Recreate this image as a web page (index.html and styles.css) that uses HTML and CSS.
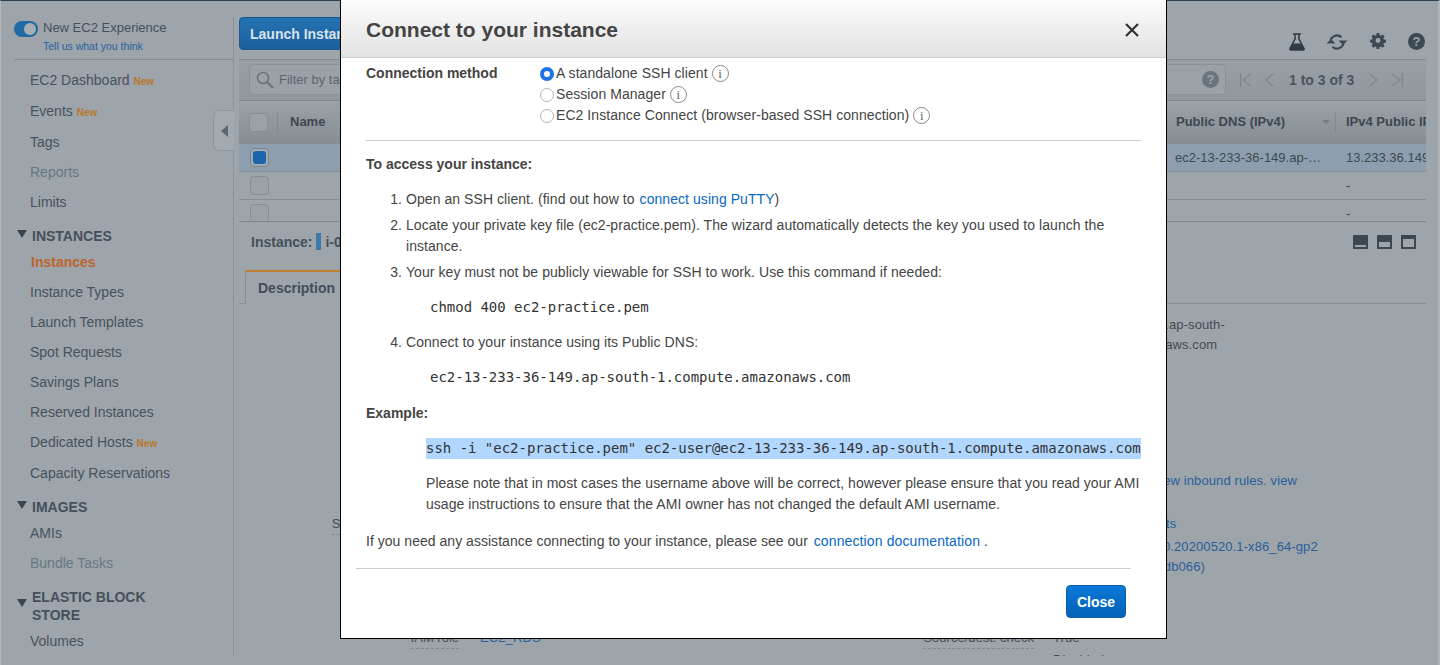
FILE: index.html
```html
<!DOCTYPE html>
<html lang="en">
<head>
<meta charset="utf-8">
<title>Connect to your instance</title>
<link rel="stylesheet" href="styles.css">
</head>
<body>
<div class="page">
  <aside class="sidebar">
    <div class="experience">
      <span class="toggle"><span class="toggle-knob"></span></span>
      <div>
        <div class="exp-title">New EC2 Experience</div>
        <a class="exp-link">Tell us what you think</a>
      </div>
    </div>
    <ul class="nav">
      <li class="tall">EC2 Dashboard <span class="new">New</span></li>
      <li class="tall">Events <span class="new">New</span></li>
      <li>Tags</li>
      <li class="muted">Reports</li>
      <li>Limits</li>
    </ul>
    <h3 class="nav-head"><span class="caret"></span>INSTANCES</h3>
    <ul class="nav">
      <li class="current">Instances</li>
      <li>Instance Types</li>
      <li>Launch Templates</li>
      <li>Spot Requests</li>
      <li>Savings Plans</li>
      <li>Reserved Instances</li>
      <li class="tall">Dedicated Hosts <span class="new">New</span></li>
      <li>Capacity Reservations</li>
    </ul>
    <h3 class="nav-head"><span class="caret"></span>IMAGES</h3>
    <ul class="nav">
      <li>AMIs</li>
      <li class="muted">Bundle Tasks</li>
    </ul>
    <h3 class="nav-head nav-head-double"><span class="caret"></span>ELASTIC BLOCK<br>STORE</h3>
    <ul class="nav">
      <li>Volumes</li>
    </ul>
    <div class="collapse"><span class="collapse-arrow"></span></div>
  </aside>

  <main class="main">
    <div class="toolbar">
      <button class="launch">Launch Instance</button>
      <div class="tools">
        <svg class="tool" width="20" height="18" viewBox="0 0 20 18"><path d="M6 1h8M8 1v5L3 15.500Q2.600 17 4 17h12q1.400 0 1-1.500L12 6V1" fill="none" stroke="#2f3a44" stroke-width="1.500"/><path d="M5.800 10.500h8.400L17.800 17H2.200z" fill="#2f3a44"/></svg>
        <svg class="tool" width="22" height="18" viewBox="0 0 22 18"><path d="M4.500 9a6.500 6.500 0 0 1 11-4.700M17.500 9a6.500 6.500 0 0 1-11 4.700" fill="none" stroke="#3c4852" stroke-width="2.200"/><path d="M12.500 7.500h9l-4.500 4.500zM.5 10.500h9L5 6z" fill="#3c4852"/></svg>
        <svg class="tool" width="16" height="16" viewBox="0 0 16 16"><path fill-rule="evenodd" d="M6.500 0h3l.4 2.300 1.300.6L13.200 1.600l2.100 2.100-1.300 2 .6 1.300 2.300.5v3l-2.300.4-.6 1.300 1.300 1.900-2.100 2.100-2-1.300-1.300.6-.4 2.300h-3l-.4-2.300-1.300-.6-1.900 1.300-2.100-2.100 1.300-1.900-.6-1.300L-.8 10.500v-3l2.300-.5.6-1.300-1.300-2 2.100-2.100 2 1.300 1.300-.6zM8 5.500a2.700 2.700 0 1 0 0 5.400 2.700 2.700 0 0 0 0-5.400z" fill="#3c4852" transform="translate(.8 .1) scale(.9)"/></svg>
        <span class="help help-dark">?</span>
      </div>
    </div>

    <div class="filterbar">
      <div class="search">
        <svg width="18" height="18" viewBox="0 0 18 18"><circle cx="7" cy="7" r="5.500" fill="none" stroke="#6b747b" stroke-width="1.600"/><path d="M11 11l6 6" stroke="#6b747b" stroke-width="2.400"/></svg>
        <span class="search-text">Filter by tags and attributes or search by keyword</span>
        <span class="help help-grey">?</span>
      </div>
      <div class="pager">
        <svg width="12" height="14" viewBox="0 0 12 14"><path d="M.700 0v14M11 1L3 7l8 6" fill="none" stroke="#7d858b" stroke-width="1.200"/></svg>
        <svg width="9" height="14" viewBox="0 0 9 14"><path d="M8 1L1 7l7 6" fill="none" stroke="#7d858b" stroke-width="1.200"/></svg>
        <span class="pager-text">1 to 3 of 3</span>
        <svg width="9" height="14" viewBox="0 0 9 14"><path d="M1 1l7 6-7 6" fill="none" stroke="#7d858b" stroke-width="1.200"/></svg>
        <svg width="12" height="14" viewBox="0 0 12 14"><path d="M11.300 0v14M1 1l8 6-8 6" fill="none" stroke="#7d858b" stroke-width="1.200"/></svg>
      </div>
    </div>

    <div class="grid">
      <div class="row row-head">
        <div class="cell-check"><span class="box"></span><span class="sep"></span></div>
        <div class="cell-name">Name</div>
        <div class="cell-dns">Public DNS (IPv4)<span class="sort"></span><span class="sep sep-end"></span></div>
        <div class="cell-ip">IPv4 Public IP</div>
      </div>
      <div class="row row-selected">
        <div class="cell-check"><span class="box box-on"><span class="box-fill"></span></span></div>
        <div class="cell-name"></div>
        <div class="cell-dns">ec2-13-233-36-149.ap-…</div>
        <div class="cell-ip">13.233.36.149</div>
      </div>
      <div class="row">
        <div class="cell-check"><span class="box"></span></div>
        <div class="cell-name"></div>
        <div class="cell-dns"></div>
        <div class="cell-ip">-</div>
      </div>
      <div class="row">
        <div class="cell-check"><span class="box"></span></div>
        <div class="cell-name"></div>
        <div class="cell-dns"></div>
        <div class="cell-ip">-</div>
      </div>
    </div>

    <div class="instance-bar">
      <b class="instance-label">Instance:</b>
      <span class="state-bar"></span>
      <b class="instance-id">i-0</b>
      <div class="panes">
        <span class="pane pane-a"></span>
        <span class="pane pane-b"></span>
        <span class="pane pane-c"></span>
      </div>
    </div>

    <div class="tabs"><div class="tab">Description</div></div>

    <div class="details">
      <div class="c4">ec2-13-233-36-149.ap-south-<br>1.compute.amazonaws.com</div>
      <div class="c4"><a class="link">launch-wizard-1. view inbound rules. view</a></div>
      <div class="c1"><span class="label">Secondary private IPs</span></div>
      <div class="c4"><a class="link">No scheduled events</a></div>
      <div class="c4"><a class="link">amzn2-ami-hvm-2.0.20200520.1-x86_64-gp2<br>(ami-0447a12f28fddb066)</a></div>
      <div class="c1"><span class="label">IAM role</span></div>
      <div class="c2"><a class="link">EC2_RDS</a></div>
      <div class="c3"><span class="label">Source/dest. check</span></div>
      <div class="c4">True</div>
      <div class="c4">Disabled</div>
    </div>
  </main>
</div>

<section class="modal">
  <header class="modal-head">
    <h2 class="modal-title">Connect to your instance</h2>
    <svg class="modal-x" width="14" height="14" viewBox="0 0 14 14"><path d="M1 1l12 12M13 1L1 13" stroke="#333" stroke-width="2.200"/></svg>
  </header>
  <div class="modal-body">
    <div class="method">
      <b class="method-label">Connection method</b>
      <div class="options">
        <label class="option"><input class="radio" type="radio" name="m" checked>A standalone SSH client<span class="info">i</span></label>
        <label class="option"><input class="radio" type="radio" name="m">Session Manager<span class="info">i</span></label>
        <label class="option"><input class="radio" type="radio" name="m">EC2 Instance Connect (browser-based SSH connection)<span class="info">i</span></label>
      </div>
    </div>
    <hr class="rule rule-method">
    <p class="lead"><b>To access your instance:</b></p>
    <ol class="steps">
      <li>Open an SSH client. (find out how to <a class="mlink">connect using PuTTY</a>)</li>
      <li>Locate your private key file (ec2-practice.pem). The wizard automatically detects the key you used to launch the instance.</li>
      <li>Your key must not be publicly viewable for SSH to work. Use this command if needed:
        <pre class="code">chmod 400 ec2-practice.pem</pre>
      </li>
      <li class="step-last">Connect to your instance using its Public DNS:
        <pre class="code">ec2-13-233-36-149.ap-south-1.compute.amazonaws.com</pre>
      </li>
    </ol>
    <p class="example"><b>Example:</b></p>
    <div class="example-body">
      <pre class="code-selected">ssh -i "ec2-practice.pem" ec2-user@ec2-13-233-36-149.ap-south-1.compute.amazonaws.com</pre>
      <p class="note">Please note that in most cases the username above will be correct, however please ensure that you read your AMI usage instructions to ensure that the AMI owner has not changed the default AMI username.</p>
    </div>
    <p class="assist">If you need any assistance connecting to your instance, please see our <a class="mlink">connection documentation</a> .</p>
  </div>
  <footer class="modal-foot">
    <button class="close">Close</button>
  </footer>
</section>
</body>
</html>
```

FILE: styles.css
```css
* { box-sizing: border-box; }
html, body { margin: 0; height: 100%; overflow: hidden; }
body {
  background: #9da4aa;
  font-family: "Liberation Sans", Arial, sans-serif;
  font-size: 14px;
  color: #46505a;
  position: relative;
}
ul { list-style: none; margin: 0; padding: 0; }
h2, h3, p, pre { margin: 0; }

.page {
  display: flex;
  height: 665px;
  border-top: 1px solid #2e3f50;
  border-left: 1px solid #b0b6bb;
  border-right: 2px solid #b0b6bb;
}

/* sidebar */
.sidebar {
  position: relative;
  width: 233px;
  height: 639px;
  margin-top: 16px;
  border-right: 1px solid #8b9399;
  flex: none;
}
.experience {
  display: flex;
  gap: 5px;
  height: 43px;
  margin-left: 13px;
  padding-top: 3px;
  border-bottom: 1px solid #878f95;
}
.toggle {
  width: 24px;
  height: 16px;
  border-radius: 8px;
  background: #1f6aa5;
  padding: 2px 2px 2px 10px;
  margin-top: 1px;
}
.toggle-knob { display: block; width: 12px; height: 12px; border-radius: 50%; background: #a6adb3; }
.exp-title { font-size: 13px; line-height: 16px; }
.exp-link { display: block; font-size: 10.5px; line-height: 20px; color: #2763a0; }
.nav { padding-left: 29px; }
.experience + .nav { margin-top: 5px; }
.nav li { height: 30px; line-height: 30px; font-size: 14px; color: #48525c; white-space: nowrap; }
.nav li.tall { height: 31px; line-height: 31px; }
.nav li.muted { color: #687880; }
.nav li.current { color: #bd642d; font-weight: bold; padding-left: 1px; }
.new { font-size: 10px; font-weight: bold; color: #b8772a; }
.nav-head {
  display: block;
  position: relative;
  height: 30px;
  padding: 8px 0 0 31px;
  font-size: 14px;
  line-height: 22px;
  color: #46505a;
}
.nav-head-double { height: 48px; padding-top: 10px; line-height: 18px; }
.caret {
  position: absolute;
  left: 16px;
  top: 13px;
  border-left: 5px solid transparent;
  border-right: 5px solid transparent;
  border-top: 8px solid #3b454e;
}
.nav-head-double .caret { top: 21px; }
.collapse {
  position: absolute;
  right: -1px;
  top: 93px;
  width: 21px;
  height: 41px;
  background: #a2a9af;
  border: 1px solid #8e969c;
  border-right: none;
  border-radius: 6px 0 0 6px;
  display: flex;
  align-items: center;
  justify-content: center;
}
.collapse-arrow { border-top: 6px solid transparent; border-bottom: 6px solid transparent; border-right: 7px solid #5d676f; margin-left: 1px; }

/* main */
.main {
  width: 1187px;
  height: 655px;
  margin-left: 5px;
  overflow: hidden;
  flex: none;
}
.toolbar {
  display: flex;
  align-items: center;
  justify-content: space-between;
  height: 59px;
  padding-top: 16px;
  padding-bottom: 10px;
  border-bottom: 1px solid #828a90;
}
.launch {
  width: 135px;
  height: 33px;
  border: 1px solid #1a5a91;
  border-radius: 4px;
  background: linear-gradient(#2473b4, #1b5e9b);
  color: #d9e2ea;
  font: bold 14px "Liberation Sans", Arial, sans-serif;
  text-align: left;
  padding: 2px 10px 0;
}
.tools { display: flex; align-items: center; padding-right: 1px; margin-top: 16px; }
.tool { display: block; }
.tool:nth-child(1) { margin-right: 19px; margin-top: 2px; }
.tool:nth-child(2) { margin-right: 22px; margin-top: 1px; }
.tool:nth-child(3) { margin-right: 22px; }
.help {
  display: inline-flex;
  align-items: center;
  justify-content: center;
  width: 17px;
  height: 17px;
  border-radius: 50%;
  font-weight: bold;
  font-size: 13px;
  color: #9da4aa;
  flex: none;
}
.help-dark { background: #3c4852; }
.help-grey { background: #6b747b; color: #9aa2a8; margin-left: auto; margin-right: 6px; }
.filterbar {
  display: flex;
  align-items: center;
  height: 41px;
  padding: 0 0 1px 10px;
  background: linear-gradient(#98a0a6, #90989e);
  border-bottom: 1px solid #7f878d;
}
.search {
  display: flex;
  align-items: center;
  width: 977px;
  height: 31px;
  padding-left: 6px;
  border: 1px solid #8a9298;
  border-radius: 4px;
  background: #9aa1a7;
}
.search-text { margin-left: 5px; font-size: 13px; color: #5c656c; }
.pager { display: flex; align-items: center; margin-left: 14px; }
.pager svg:nth-child(1) { margin-right: 13px; }
.pager svg:nth-child(4) { margin-right: 13px; }
.pager-text { font-weight: bold; color: #4a545e; margin: 0 15px; }

.grid { height: 121px; overflow: hidden; border-bottom: 1px solid #7f878d; }
.row {
  display: flex;
  align-items: center;
  height: 28px;
  border-bottom: 1px solid #868e94;
  font-size: 13px;
  color: #3f4850;
}
.row-head {
  height: 43px;
  background: linear-gradient(#9aa1a7, #868e94);
  font-weight: bold;
  color: #3e4750;
  border-bottom: 1px solid #868e94;
}
.row-selected { background: #8d9fae; }
.cell-check { position: relative; width: 39px; padding-left: 11px; display: flex; align-items: center; flex: none; }
.cell-name { flex: 1; padding-left: 12px; font-size: 13px; }
.cell-dns { position: relative; width: 167px; padding-left: 6px; white-space: nowrap; flex: none; }
.cell-ip { width: 90px; padding-left: 10px; white-space: nowrap; overflow: hidden; flex: none; }
.row-head .cell-name, .row-head .cell-ip { padding-bottom: 2px; }
.row-head .cell-dns { padding: 0 0 2px 7px; }
.box { display: flex; align-items: center; justify-content: center; width: 19px; height: 19px; border: 1px solid #868e94; border-radius: 4px; background: #9aa1a7; }
.row-head .box { margin-left: -1px; }
.box-on { border-color: #7d858b; background: #9eaab4; }
.box-fill { width: 13px; height: 13px; border-radius: 3px; background: #1c65ab; }
.sep { position: absolute; right: 0; top: 0; width: 1px; height: 20px; background: #808890; }
.sep-end { right: 0; top: -1px; }
.sort { position: absolute; right: 6px; top: 6px; border-left: 4px solid transparent; border-right: 4px solid transparent; border-top: 4px solid #757d83; }

.instance-bar { display: flex; align-items: center; height: 41px; padding: 0 0 2px 12px; }
.instance-label { font-size: 14px; }
.state-bar { width: 5px; height: 17px; background: #3f78a8; margin: 0 4px 0 4px; }
.instance-id { font-size: 14px; }
.panes { display: flex; gap: 9px; margin-left: auto; padding-right: 10px; }
.pane { display: block; width: 15px; height: 14px; background: #3d4750; position: relative; }
.pane::after { content: ""; position: absolute; left: 2px; right: 2px; background: #9da4aa; }
.pane-a::after { bottom: 2px; height: 2px; }
.pane-b::after { bottom: 2px; height: 5px; }
.pane-c::after { bottom: 2px; top: 4px; }

.tabs { height: 41px; padding: 7px 0 0 6px; border-bottom: 1px solid #878f95; }
.tab {
  width: 140px;
  height: 34px;
  border-top: 2px solid #c07f2f;
  border-left: 1px solid #878f95;
  border-top-left-radius: 3px;
  padding-left: 12px;
  line-height: 32px;
  font-weight: bold;
  font-size: 14px;
  color: #434d57;
  background: #9da4aa;
}
.details {
  display: grid;
  grid-template-columns: 241px 440px 133px 1fr;
  grid-template-rows: 156px 43px 23px 91px 22px 20px;
  padding-top: 11px;
  font-size: 13px;
  line-height: 20px;
  letter-spacing: .1px;
  color: #454c53;
}
.c1 { grid-column: 1; text-align: right; padding-right: 21px; letter-spacing: 0; }
.c2 { grid-column: 2; }
.c3 { grid-column: 3; text-align: right; padding-right: 19px; letter-spacing: 0; }
.c4 { grid-column: 4; white-space: nowrap; }
.label { display: inline-block; border-bottom: 1px dashed #7f878d; line-height: 20px; }
.link { color: #285f9b; }

/* modal */
.modal {
  position: absolute;
  left: 340px;
  top: 0;
  width: 827px;
  height: 639px;
  background: #fff;
  border: 1px solid #000;
  border-top: none;
  color: #444;
}
.modal-head {
  display: flex;
  align-items: center;
  justify-content: space-between;
  height: 58px;
  padding: 2px 27px 0 25px;
  background: linear-gradient(#fbfbfb, #e3e3e3);
  border-bottom: 1px solid #ccc;
}
.modal-title { font-size: 21px; font-weight: bold; color: #444; }
.modal-x { display: block; }
.modal-body { padding: 5px 25px 0; line-height: 21px; font-size: 14px; letter-spacing: .06px; }
.modal-body b { letter-spacing: 0; }
.method { display: flex; }
.method-label { width: 174px; flex: none; }
.options { display: flex; flex-direction: column; }
.option { display: flex; align-items: center; height: 21px; white-space: nowrap; }
.radio {
  appearance: none;
  width: 14px;
  height: 14px;
  margin: 0 2px 0 0;
  border: 1px solid #b5b5b5;
  border-radius: 50%;
  background: #fff;
}
.radio:checked {
  border: 4.500px solid #1a73e8;
  background: #fff;
}
.info {
  display: inline-flex;
  align-items: center;
  justify-content: center;
  width: 17px;
  height: 17px;
  margin-left: 4px;
  border: 1px solid #888;
  border-radius: 50%;
  font: 13px/1 "Liberation Serif", serif;
  color: #666;
}
.rule { border: none; border-top: 1px solid #ccc; margin: 0; }
.rule-method { margin-top: 14px; }
.lead { margin-top: 13px; }
.steps { margin: 14px 0 0; padding-left: 40px; }
.steps li + li { margin-top: 5px; }
.code { margin: 14px 0 0 24px; font: 14px/21px "DejaVu Sans Mono", monospace; letter-spacing: -.02px; color: #333; }
.steps .step-last { margin-top: 14px; }
.example { margin-top: 15px; }
.example-body { margin-top: 14px; padding-left: 60px; }
.code-selected {
  font: 14px/21px "DejaVu Sans Mono", monospace;
  letter-spacing: -.02px;
  color: #333;
  background: #b2d7ff;
  white-space: pre;
}
.note { margin-top: 14px; letter-spacing: .04px; }
.assist { margin-top: 16px; letter-spacing: .03px; }
.mlink { color: #0a67bf; margin-left: 1px; }
.assist .mlink { letter-spacing: .12px; margin-left: 2px; }
.modal-foot {
  display: flex;
  justify-content: flex-end;
  margin: 16px 35px 0 15px;
  padding-top: 16px;
  border-top: 1px solid #ccc;
}
.close {
  width: 60px;
  height: 33px;
  margin-right: 5px;
  border: 1px solid #0b5da8;
  border-radius: 4px;
  background: linear-gradient(#0a78d7, #0462b8);
  color: #fff;
  font: bold 14px "Liberation Sans", Arial, sans-serif;
}
```
